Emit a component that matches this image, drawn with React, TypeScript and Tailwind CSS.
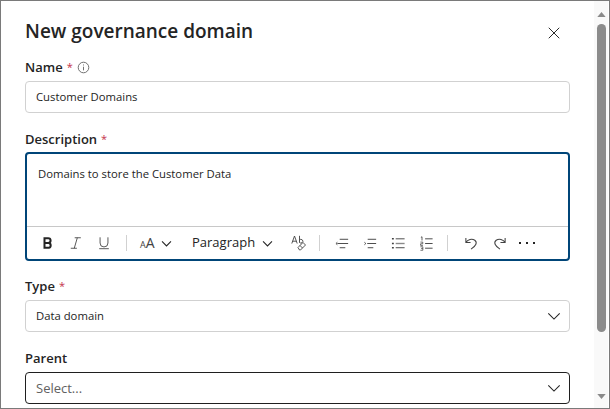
import type { ReactNode } from 'react'

const FONT = "font-['Open_Sans','Noto_Sans',sans-serif]"

function Icon({ size = 16, sw = 1, className = '', children }: { size?: number; sw?: number; className?: string; children: ReactNode }) {
    return (
        <svg
            viewBox="0 0 16 16"
            width={size}
            height={size}
            fill="none"
            stroke="currentColor"
            strokeWidth={sw}
            className={`block shrink-0 ${className}`}
        >
            {children}
        </svg>
    )
}

function Chevron({ size }: { size: number }) {
    return (
        <Icon size={size} sw={16 / size + 0.1} className="text-[#242424]">
            <path d="M1.500 5l6.500 6.500L14.500 5" />
        </Icon>
    )
}

function Label({ text, required, info }: { text: string; required?: boolean; info?: boolean }) {
    return (
        <div className="flex items-center h-[20px] text-[13px] font-semibold leading-[20px] text-[#242424]">
            {text}
            {required && <span className="ml-[4px] text-[11px] text-[#c4314b] font-normal">*</span>}
            {info && (
                <Icon size={13} sw={1.1} className="ml-[4px] text-[#616161]">
                    <circle cx="8" cy="8" r="6.500" />
                    <path d="M8 7v4.500M8 4.300v1.200" />
                </Icon>
            )}
        </div>
    )
}

function SelectBox({ value, placeholder, dark }: { value: string; placeholder?: boolean; dark?: boolean }) {
    return (
        <div
            className={`flex items-center justify-between h-[32px] rounded-[4px] border pl-[10px] pr-[8px] ${
                dark ? 'border-[#1f1f1f]' : 'border-[#d1d1d1]'
            } ${placeholder ? 'text-[13px] text-[#616161]' : 'text-[11.300px] text-[#242424]'}`}
        >
            <span className="pt-px">{value}</span>
            <Chevron size={14} />
        </div>
    )
}

function Slot({ children }: { children: ReactNode }) {
    return <div className="w-[28px] flex items-center justify-center text-[#424242]">{children}</div>
}

function Divider({ className }: { className: string }) {
    return <div className={`w-px h-[16px] bg-[#d1d1d1] ${className}`} />
}

function Toolbar() {
    return (
        <div className="flex items-center h-[33px] border-t border-[#c8c8c8] pl-[7px] text-[#242424]">
            <Slot>
                <Icon size={14} sw={2.3} className="text-[#242424]">
                    <path d="M4 2.500h4.200a2.700 2.700 0 0 1 0 5.500H4zM4 8h4.800a2.800 2.800 0 0 1 0 5.500H4z" />
                </Icon>
            </Slot>
            <Slot>
                <Icon size={14} sw={1}>
                    <path d="M6.500 2h7M9.500 2L6 14M2 14h7" />
                </Icon>
            </Slot>
            <Slot>
                <Icon size={14} sw={1}>
                    <path d="M3.500 1.500v6.500a4.500 4.500 0 0 0 9 0V1.500M2.500 14.500h11" />
                </Icon>
            </Slot>
            <Divider className="ml-[8px]" />
            <span className="ml-[13px] w-[16px] flex items-baseline text-[#424242] leading-none">
                <span className="text-[9px]">A</span>
                <span className="text-[14px]">A</span>
            </span>
            <div className="ml-[5px]"><Chevron size={11} /></div>
            <span className="ml-[20px] w-[63px] text-[13px] text-[#242424] whitespace-nowrap">Paragraph</span>
            <div className="ml-[7px]"><Chevron size={11} /></div>
            <div className="ml-[18px] text-[#424242]">
                <Icon size={16} sw={0.9}>
                    <path d="M0.800 8.500L3.500 1 6.200 8.500M1.700 6.200h3.600M8.500 0.800v7M8.500 5.300a1.800 1.800 0 1 1 0 1.800" />
                    <path d="M7 12.500l5-5 2.500 2.500-5 5H8.500zM9 10.500l2.500 2.500" />
                </Icon>
            </div>
            <Divider className="ml-[12px]" />
            <div className="ml-[8px]">
                <Slot>
                    <Icon size={15}>
                        <path d="M5 3.500h9M2.500 8h11.500M5 12.500h6M2.500 6.700L1 8l1.500 1.300" />
                    </Icon>
                </Slot>
            </div>
            <Slot>
                <Icon size={15}>
                    <path d="M5 3.500h9M4.500 8h9.500M5 12.500h6M1.500 6.700L3 8l-1.500 1.300" />
                </Icon>
            </Slot>
            <Slot>
                <Icon size={15}>
                    <path d="M5 3h9.500M5 12.500h9.500" />
                    <path d="M5 8h9.500" strokeWidth="1.500" className="text-[#8a8a8a]" />
                    <path d="M1 3h2M1 8h2M1 12.500h2" strokeWidth="1.600" />
                </Icon>
            </Slot>
            <Slot>
                <Icon size={15}>
                    <path d="M6.500 3h8M6.500 8h8M6.500 13h8" />
                    <path d="M2 1.500l1.200-.7v4" strokeWidth="0.9" />
                    <path d="M1.500 6.500h2.500v1.800H1.700v1.700h2.500" strokeWidth="0.8" />
                    <path d="M1.500 11.500h2.600v3.700H1.500M2.300 13.300h1.800" strokeWidth="0.8" />
                </Icon>
            </Slot>
            <Divider className="ml-[7px]" />
            <div className="ml-[9px]">
                <Slot>
                    <Icon size={15} sw={1.1}>
                        <path d="M2 2v5h5M2 7c2-3.500 6.500-4.500 9.500-2.500 3 2.300 1.500 6-4 9.500" />
                    </Icon>
                </Slot>
            </div>
            <Slot>
                <Icon size={15} sw={1.1}>
                    <path d="M14 2v5H9M14 7c-2-3.500-6.500-4.500-9.500-2.500-3 2.300-1.500 6 4 9.500" />
                </Icon>
            </Slot>
            <div className="ml-[6px] flex gap-[5px]">
                <span className="w-[2px] h-[2px] bg-[#242424]" />
                <span className="w-[2px] h-[2px] bg-[#242424]" />
                <span className="w-[2px] h-[2px] bg-[#242424]" />
            </div>
        </div>
    )
}

function Scrollbar() {
    return (
        <div className="w-[14px] mr-[1px] flex flex-col items-center bg-[#f9f9f9]">
            <svg viewBox="0 0 10 6" className="mt-[11px] w-[9px] h-[5px] text-[#8a8a8a]" fill="currentColor">
                <path d="M5 0l5 6H0z" />
            </svg>
            <div className="mt-[7px] w-[9px] h-[308px] rounded-full bg-[#8b8b8b]" />
            <div className="flex-1" />
            <svg viewBox="0 0 10 6" className="mb-[9px] w-[9px] h-[5px] text-[#8a8a8a]" fill="currentColor">
                <path d="M0 0h10L5 6z" />
            </svg>
        </div>
    )
}

export default function App() {
    return (
        <div className={`${FONT} w-[610px] h-[409px] overflow-hidden flex bg-white border border-[#7a7a7a]`}>
            <div className="flex-1 min-w-0 pl-[24px] pr-[24px] pt-[14px]">
                <div className="flex items-center justify-between h-[32px]">
                    <h1 className="text-[19px] font-semibold text-[#242424]">New governance domain</h1>
                    <Icon size={12} sw={1.300} className="mt-[4px] mr-[10px] text-[#242424]">
                        <path d="M1 1l14 14M15 1L1 15" />
                    </Icon>
                </div>

                <div className="mt-[10px]"><Label text="Name" required info /></div>
                <div className="mt-[4px] flex items-center h-[32px] rounded-[4px] border border-[#d1d1d1] px-[10px] pt-px text-[11.300px] text-[#242424]">
                    Customer Domains
                </div>

                <div className="mt-[16px]"><Label text="Description" required /></div>
                <div className="mt-[3px] h-[109px] rounded-[4px] border-2 border-[#004578] flex flex-col">
                    <div className="flex-1 px-[11px] pt-[12px] text-[11.300px] leading-[16px] text-[#242424]">
                        Domains to store the Customer Data
                    </div>
                    <Toolbar />
                </div>

                <div className="mt-[15px]"><Label text="Type" required /></div>
                <div className="mt-[4px]"><SelectBox value="Data domain" /></div>

                <div className="mt-[16px]"><Label text="Parent" /></div>
                <div className="mt-[4px]"><SelectBox value="Select..." placeholder dark /></div>
            </div>
            <Scrollbar />
        </div>
    )
}
